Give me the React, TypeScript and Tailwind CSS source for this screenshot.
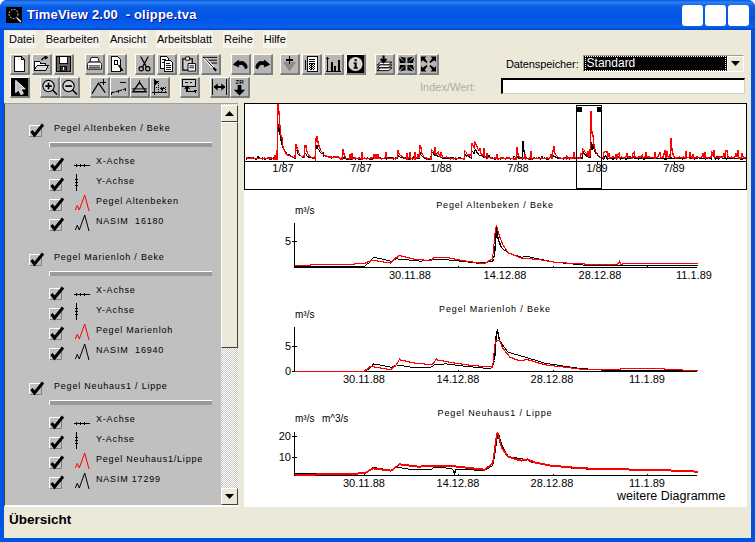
import React from "react";

type P = [number, number];

function steps(points: P[], ox: number, oy: number): string {
  const pts = points.map(([x, y]) => [x / 3 + ox, y / 3 + oy]);
  let d = "";
  const x0 = Math.round(pts[0][0]);
  const x1 = Math.round(pts[pts.length - 1][0]);
  let i = 0;
  for (let x = x0; x <= x1; x++) {
    while (i < pts.length - 2 && pts[i + 1][0] < x) i++;
    const [ax, ay] = pts[i];
    const [bx, by] = pts[i + 1];
    const t = bx === ax ? 0 : Math.min(1, Math.max(0, (x - ax) / (bx - ax)));
    const y = Math.round(ay + (by - ay) * t);
    d += (d ? "L" : "M") + x + " " + y + " ";
  }
  return d;
}

function overview(red: boolean): string {
  const peaks: number[][] = [
    [278, 55, 26, 2], [279, 14, 18, 6], [296, 14, 8, 3], [305, 11, 5, 3], [316, 20, 10, 3], [317, 6, 5, 9],
    [343, 10, 1, 1], [398, 6, 3, 3], [420, 14, 7, 2], [432, 9, 6, 6], [465, 8, 4, 5], [472, 14, 7, 5], [475, 8, 5, 5],
    [517, 12, 2, 1], [523, 1, 15, 1], [553, 8, 3, 3], [583, 10, 7, 4], [591, 46, 14, 1.5], [593, 10, 10, 3],
    [671, 19, 1, 1], [712, 5, 6, 1],
  ];
  let seed = red ? 12345 : 777;
  const rnd = () => {
    seed = (seed * 1103515245 + 12345) & 0x7fffffff;
    return seed / 0x7fffffff;
  };
  let d = "";
  for (let x = 246; x <= 746; x++) {
    let y = 159;
    for (const [x0, hr, hb, tau] of peaks) {
      if (x >= x0) y -= (red ? hr : hb) * Math.exp(-(x - x0) / tau);
    }
    const dense = x > 600 ? 0.18 : x > 330 ? 0.1 : 0.05;
    y -= Math.floor(rnd() * 2);
    if (rnd() < dense) y -= (red ? 3 : 1) + Math.floor(rnd() * (red ? 5 : 2));
    if (x > 600 && red) y -= 1;
    d += (d ? "L" : "M") + x + " " + Math.round(y) + " ";
  }
  return d;
}

const c1b: P[] = [[150,213],[230,213],[340,213],[360,213],[375,200],[387,185],[410,190],[440,197],[455,190],[480,192],[530,197],[565,192],[600,192],[640,196],[700,203],[745,197],[752,170],[755,85],[760,130],[770,155],[790,172],[830,185],[850,183],[880,190],[930,200],[1040,211],[1200,209],[1358,211]];
const c1r: P[] = [[150,210],[250,207],[360,205],[375,197],[387,195],[440,203],[455,188],[465,180],[510,192],[560,195],[570,187],[610,187],[650,195],[720,205],[745,190],[750,130],[755,85],[762,115],[775,150],[790,172],[830,188],[880,192],[930,200],[1000,205],[1120,208],[1124,197],[1128,207],[1150,203],[1280,205],[1358,205]];
const c2b: P[] = [[150,213],[360,213],[375,205],[387,190],[440,200],[455,193],[500,200],[560,200],[570,193],[605,190],[650,196],[740,205],[750,180],[757,82],[765,120],[790,155],[850,172],[900,188],[1000,203],[1100,211],[1358,211]];
const c2r: P[] = [[150,213],[360,213],[378,198],[440,208],[455,195],[465,178],[510,188],[565,193],[575,178],[620,186],[680,195],[745,200],[752,120],[765,120],[775,145],[795,170],[820,180],[850,178],[900,193],[1000,205],[1030,208],[1150,205],[1250,205],[1358,211]];
const c3b: P[] = [[150,220],[215,220],[360,220],[385,200],[440,210],[455,200],[500,207],[560,207],[570,200],[610,203],[626,206],[630,218],[634,206],[720,210],[745,195],[752,150],[760,93],[770,130],[790,168],[850,178],[860,185],[920,195],[1000,205],[1150,208],[1300,212],[1358,212]];
const c3r: P[] = [[150,225],[360,220],[385,205],[440,212],[465,193],[520,200],[570,197],[620,198],[720,209],[745,190],[758,93],[770,140],[790,170],[830,182],[850,178],[870,187],[920,197],[1010,205],[1300,212],[1358,215]];

function Chart(props: {
  top: number; height: number; title: string; titleX: number; titleY: number; unit: string; unit2?: string; unitY: number;
  axisTop: number; base: number; yt: [number, string][]; ticks: number[]; labels: [number, string][];
  black: string; red: string; redWidth: number;
}) {
  const { top, height, title, titleX, titleY, unit, unit2, unitY, axisTop, base, yt, ticks, labels, black, red, redWidth } = props;
  return (
    <svg width={503} height={height} viewBox={`244 ${top} 503 ${height}`} className="block shrink-0">
      <text x={titleX} y={titleY} textAnchor="middle" fontSize={9} letterSpacing={0.85} fill="#000">{title}</text>
      <text x={295} y={unitY} fontSize={10} fill="#000">{unit}</text>
      {unit2 && <text x={322} y={unitY} fontSize={10} fill="#000">{unit2}</text>}
      <g shapeRendering="crispEdges" stroke="#000" fill="none">
        <path d={`M294.5 ${axisTop}V${base + 0.5}`} />
        <path d={`M294 ${base + 0.5}H697`} />
        {yt.map(([y]) => <path key={y} d={`M292 ${y + 0.5}H297`} />)}
        {ticks.map((x) => <path key={x} d={`M${x + 0.5} ${base - 1}V${base + 1}`} />)}
        <path d={black} strokeWidth={1.4} transform="translate(0.5 0.5)" />
        <path d={red} stroke="#f00" strokeWidth={redWidth} transform="translate(0.5 0)" />
      </g>
      {yt.map(([y, l]) => (
        <text key={l} x={291} y={y + 4} textAnchor="end" fontSize={11} fill="#000">{l}</text>
      ))}
      {labels.map(([x, l]) => (
        <text key={l} x={x} y={base + 12} textAnchor="middle" fontSize={11} fill="#000">{l}</text>
      ))}
    </svg>
  );
}

function Icon({ children }: { children: React.ReactNode }) {
  return (
    <svg width={18} height={18} viewBox="0 0 18 18" fill="none" stroke="#000" strokeWidth={1} className="block" shapeRendering="crispEdges">
      {children}
    </svg>
  );
}

function Btn({ children, dark }: { children: React.ReactNode; dark?: boolean }) {
  return (
    <div
      className={
        "w-5 h-[21px] shrink-0 flex items-center justify-center border-t border-l border-t-white border-l-white border-r-2 border-b-2 border-r-[#7d7d7d] border-b-[#7d7d7d] " +
        (dark ? "bg-black" : "bg-[#b6b6b6]")
      }
    >
      {children}
    </div>
  );
}

const icons: Record<string, React.ReactNode> = {
  new: <path d="M3.5 1.5H11.5L14.5 4.5V16.5H3.5ZM11.5 1.5V4.5H14.5" fill="#fff" />,
  open: (<><path d="M1.5 15.5V6.5H7.5V8.5H13.5V15.5Z" fill="#fff" /><path d="M1.5 15.5L4.5 10.5H16.5L13.5 15.5" fill="#ddd" /><path d="M9 5C10 3 12 2 14 2M12 1L15 2L13 4" strokeWidth={1.4} shapeRendering="auto" /></>),
  save: (<><path d="M1.5 1.5H16.5V16.5H1.5Z" fill="#666" /><path d="M4.5 1.5H13.5V8.5H4.5Z" fill="#fff" /><path d="M5.5 11.5H12.5V16.5H5.5Z" fill="#333" /><path d="M9.5 12V15.5" stroke="#fff" /></>),
  print: (<g shapeRendering="auto"><path d="M5.5 2H12.5L14 7H4Z" fill="#fff" /><path d="M1.5 9.5C1.5 7.5 3 7 4 7H14C15 7 16.5 7.5 16.5 9.5V14.5H1.5Z" fill="#fff" /><path d="M3 11H15M3 13H15" /></g>),
  preview: (<><path d="M3.5 1.5H10.5L13.5 4.5V16.5H3.5Z" fill="#fff" /><path d="M10 5.5H7V9.5H10Z" strokeWidth={1.2} /><path d="M11 10L15 15M13 15.5H16" strokeWidth={1.6} shapeRendering="auto" /></>),
  cut: (<g shapeRendering="auto"><path d="M5 1L11 12M13 1L7 12" strokeWidth={1.3} /><circle cx={5.5} cy={14} r={2.3} strokeWidth={1.3} /><circle cx={12.5} cy={14} r={2.3} strokeWidth={1.3} /></g>),
  copy: (<><path d="M2.5 1.5H9.5L11.5 3.5V13.5H2.5Z" fill="#fff" /><path d="M6.5 5.5H13.5L15.5 7.5V16.5H6.5Z" fill="#fff" /><path d="M4 4.5H8M4 7.5H6M8 8.5H13M8 10.5H14M8 12.5H14M8 14.5H14" /></>),
  paste: (<g shapeRendering="auto"><path d="M3 3.5H13V15.5H3Z" fill="#ccc" strokeWidth={1.3} /><path d="M6 1.5H10V5H6Z" fill="#fff" /><path d="M8.5 8.5H16.5V16.5H8.5Z" fill="#fff" /><path d="M10 11H15M10 13H15" /></g>),
  wand: (<g shapeRendering="auto"><path d="M1 2H16M5 5H16M9 8H16" strokeWidth={1} /><path d="M3 3L14 15" stroke="#fff" strokeWidth={3} /><path d="M3 3L14 15" strokeWidth={1} /><path d="M12 13L15 16" strokeWidth={2.5} /></g>),
  undo: <path d="M7 3L1.5 7.5L7 10V8C10 6.5 13 8 14 12L16 11C16 6 12 3 7 5Z" fill="#000" shapeRendering="auto" transform="translate(0 2)" />,
  redo: <path d="M11 3L16.5 7.5L11 10V8C8 6.5 5 8 4 12L2 11C2 6 6 3 11 5Z" fill="#000" shapeRendering="auto" transform="translate(0 2)" />,
  heart: (<><path d="M2 7H8L9 8L10 7H16L9 17Z" fill="#8c8c8c" stroke="none" shapeRendering="auto" /><path d="M9 1V9M5 5H13" strokeWidth={2} /></>),
  calc: (<><path d="M4.5 1.5H15.5V16.5H4.5Z" fill="#fff" /><path d="M2.5 4.5V15.5" /><path d="M6 4H14M6 6.5H14M6 9H14M6 11.5H14M6 14H14M8.5 4V15M11.5 4V15" strokeDasharray="1 1" strokeWidth={1.2} /></>),
  bars: (<><path d="M2.5 17V2M1 3.5H4M1 17H17" strokeWidth={1.4} /><path d="M6 7H8V16H6ZM10 11H12V16H10ZM14 5H16V16H14Z" fill="#000" stroke="none" /></>),
  info: (<g shapeRendering="auto"><circle cx={9} cy={9} r={7.5} fill="#d5d5d5" stroke="none" /><path d="M8 4H10.3V6.2H8ZM7 7.5H10.3V12.5H11.5V14H7V12.5H8V9H7Z" fill="#000" stroke="none" /></g>),
  stack: (<g shapeRendering="auto"><path d="M1 10L5 7H17L13 10Z" fill="#fff" /><path d="M1 13L5 10H17L13 13H1ZM1 16L5 13H17L13 16Z" fill="#fff" /><path d="M8 0V6M5 3.5L8 7L11 3.5" strokeWidth={2.2} /></g>),
  shrink: (<g shapeRendering="auto" fill="#000" stroke="none"><path d="M2 1L8 8V2H6ZM16 1L10 8V2H12ZM2 17L8 10V16H6ZM16 17L10 10V16H12ZM1 2L8 8H2ZM17 2L10 8H16ZM1 16L8 10H2ZM17 16L10 10H16Z" /></g>),
  grow: (<g shapeRendering="auto" fill="#000" stroke="none"><path d="M1 1H7L5 3L8 7L7 8L3 5L1 7ZM17 1H11L13 3L10 7L11 8L15 5L17 7ZM1 17H7L5 15L8 11L7 10L3 13L1 11ZM17 17H11L13 15L10 11L11 10L15 13L17 11Z" /></g>),
  arrow: <path d="M5 2V15L8 12L10.5 17L13 16L10.5 11H15Z" fill="#c0c0c0" stroke="#fff" shapeRendering="auto" />,
  zin: (<g shapeRendering="auto"><circle cx={8} cy={8} r={6} fill="#d5d5d5" strokeWidth={1.2} /><path d="M12 12L17 17" strokeWidth={1.6} /><path d="M8 4.5V11.5M4.5 8H11.5" strokeWidth={1.8} /></g>),
  zout: (<g shapeRendering="auto"><circle cx={8} cy={8} r={6} fill="#d5d5d5" strokeWidth={1.2} /><path d="M12 12L17 17" strokeWidth={1.6} /><path d="M4.5 8H11.5" strokeWidth={1.8} /></g>),
  lplus: (<g shapeRendering="auto"><path d="M1 16L8 5L15 15" strokeWidth={1.3} /><path d="M13 1V7M10 4H16" shapeRendering="crispEdges" /></g>),
  lminus: (<g shapeRendering="auto"><path d="M1 15L16 11" strokeWidth={1.2} strokeDasharray="3 1" /><path d="M10 4H16" shapeRendering="crispEdges" /><path d="M1 14V17M8 12V15M15 10V13" shapeRendering="crispEdges" /></g>),
  tri: (<g shapeRendering="auto"><path d="M9 4L16 14H2Z" strokeWidth={1.4} /><path d="M1 11H17" strokeWidth={1} /><path d="M9 2V6" /></g>),
  axes: (<><path d="M3.5 1V17M1 14.5H17" /><path d="M7.5 3V14M11.5 9V14M15.5 9V14M3 9.5H16" strokeDasharray="1 1" /><path d="M4 1L8 4L4 7Z" fill="#000" stroke="none" /><path d="M10 11H15M12.5 10V13" /></>),
  win: (<><path d="M1.5 1.5H15.5V8.5H1.5Z" fill="#c8c8c8" /><path d="M4 4.5H7M9 4.5H12" /><path d="M6.5 8V14H15" strokeWidth={1.5} /><path d="M4 11L6.5 8L9 11" strokeWidth={1.2} shapeRendering="auto" /><path d="M14 13H17M15.5 12V15" /></>),
  fit: (<><path d="M1.5 1V17M16.5 1V17" /><path d="M3 9H15" strokeWidth={1.4} /><path d="M3 9L7 5V13ZM15 9L11 5V13Z" fill="#000" stroke="none" shapeRendering="auto" /></>),
};

function ZrIcon() {
  return (
    <svg width={18} height={18} viewBox="0 0 18 18" className="block">
      <text x={9} y={5.5} textAnchor="middle" fontSize={6.5} fontWeight={700} fill="#000">ZR</text>
      <path d="M7 7H11V12H15L9 18L3 12H7Z" fill="#000" />
    </svg>
  );
}

function B({ n, dark }: { n: string; dark?: boolean }) {
  return <Btn dark={dark}><Icon>{icons[n]}</Icon></Btn>;
}

function Check() {
  return (
    <svg width={16} height={15} viewBox="0 0 16 15" className="block shrink-0">
      <path d="M0.5 13.5V2.5H12" stroke="#fff" fill="none" />
      <path d="M12.5 2.5V13.5H0.5" stroke="#808080" fill="none" />
      <path d="M2.5 8L5.5 12L14 1.5" stroke="#000" strokeWidth={3} fill="none" />
    </svg>
  );
}

function Legend({ kind }: { kind: "x" | "y" | "r" | "b" }) {
  return (
    <svg width={17} height={20} viewBox="0 0 17 20" className="block shrink-0 mt-[-3px]" fill="none" stroke="#000">
      {kind === "x" && <path shapeRendering="crispEdges" d="M0 11.5H16M2.5 10V13M6.5 10V13M10.5 10V13" />}
      {kind === "y" && <path shapeRendering="crispEdges" d="M2.5 0V17M1 5.5H4M1 8.5H4M1 11.5H4" />}
      {kind === "r" && <polyline points="1.3,16 3.3,11.3 5.3,16 10.7,1 15,17" stroke="#f00" />}
      {kind === "b" && <polyline points="1.3,16 3.3,11.3 5.3,16 10.7,1 15,17" />}
    </svg>
  );
}

function Row({ kind, label }: { kind: "x" | "y" | "r" | "b"; label: string }) {
  return (
    <div className="h-5 flex items-start pl-[44px]">
      <Check />
      <div className="ml-[9px]"><Legend kind={kind} /></div>
      <span className="ml-[5px] text-[9px] leading-[8px] tracking-[0.8px] whitespace-pre text-black">{label}</span>
    </div>
  );
}

function Group({ title, name, nasim }: { title: string; name: string; nasim: string }) {
  return (
    <div className="h-[129px] shrink-0">
      <div className="h-[19px] flex items-start pl-[24px]">
        <Check />
        <span className="ml-[9px] text-[9px] leading-[10px] tracking-[0.8px] text-black">{title}</span>
      </div>
      <div className="ml-[44px] w-[163px] h-[5px] bg-[#9a9a9a] border-t border-l border-white mb-[10px]" />
      <Row kind="x" label="X-Achse" />
      <Row kind="y" label="Y-Achse" />
      <Row kind="r" label={name} />
      <Row kind="b" label={nasim} />
    </div>
  );
}

function ScrollBtn({ up }: { up?: boolean }) {
  return (
    <div className="w-[17px] h-[17px] shrink-0 bg-[#ece9d8] border-t border-l border-t-white border-l-white border-r border-b border-r-[#404040] border-b-[#404040] flex items-center justify-center">
      <svg width={9} height={5} viewBox="0 0 9 5"><path d={up ? "M4.5 0L9 5H0Z" : "M0 0H9L4.5 5Z"} fill="#000" /></svg>
    </div>
  );
}

export default function App() {
  const ovLabels: [number, string][] = [[283, "1/87"], [361, "7/87"], [441, "1/88"], [518, "7/88"], [597, "1/89"], [674, "7/89"]];
  const ticks = [364, 458, 553, 647];
  return (
    <div className="w-[755px] h-[542px] flex flex-col rounded-t-[7px] overflow-hidden bg-[#0054e3] font-['Liberation_Sans',Arial,sans-serif]">
      <div className="h-[30px] shrink-0 flex items-center pl-[6px] pr-[6px] bg-[linear-gradient(180deg,#0a5be0_0%,#2b80f5_8%,#0a5ce6_22%,#0054e3_60%,#0a5fee_90%,#0047c8_100%)]">
        <svg width={16} height={16} viewBox="0 0 16 16" className="block shrink-0">
          <rect width={16} height={16} fill="#000" />
          <circle cx={7.5} cy={7} r={4.5} fill="none" stroke="#fff" strokeDasharray="1.5 1.5" />
          <path d="M11 11L15 15" stroke="#fff" strokeWidth={1.3} />
        </svg>
        <span className="ml-[5px] text-white font-bold text-[13px] tracking-[0.2px] whitespace-pre [text-shadow:1px_1px_#0f1089]">TimeView 2.00  - olippe.tva</span>
        <div className="ml-auto flex gap-[2px]">
          <div className="w-[21px] h-[21px] rounded-[3px] bg-white" />
          <div className="w-[21px] h-[21px] rounded-[3px] bg-white" />
          <div className="w-[21px] h-[21px] rounded-[3px] bg-white" />
        </div>
      </div>

      <div className="flex-1 mx-[4px] mb-[4px] bg-[#ece9d8] flex flex-col min-h-0">
        <div className="h-[19px] shrink-0 flex items-center pl-[4px] text-[11px] text-black">
          <span className="bg-white/50 px-px">Datei</span>
          <span className="ml-[9px] bg-white/50 px-px">Bearbeiten</span>
          <span className="ml-[9px] bg-white/50 px-px">Ansicht</span>
          <span className="ml-[9px] bg-white/50 px-px">Arbeitsblatt</span>
          <span className="ml-[10px] bg-white/50 px-px">Reihe</span>
          <span className="ml-[9px] bg-white/50 px-px">Hilfe</span>
        </div>

        <div className="h-[54px] shrink-0 pt-[5px] flex flex-col gap-[2px]">
          <div className="h-[21px] flex items-center pl-[6px]">
            <div className="flex gap-[2px]"><B n="new" /><B n="open" /><B n="save" /></div>
            <div className="flex gap-[2px] ml-[11px]"><B n="print" /><B n="preview" /></div>
            <div className="flex gap-[2px] ml-[8px]"><B n="cut" /><B n="copy" /><B n="paste" /><B n="wand" /></div>
            <div className="flex gap-[2px] ml-[10px]"><B n="undo" /><B n="redo" /></div>
            <div className="flex gap-[2px] ml-[7px]"><B n="heart" /><B n="calc" /><B n="bars" /><B n="info" dark /></div>
            <div className="flex gap-[2px] ml-[9px]"><B n="stack" /><B n="shrink" /><B n="grow" /></div>
            <span className="ml-[67px] text-[11px] tracking-[-0.1px] text-black whitespace-pre">Datenspeicher:</span>
            <div className="ml-[4px] w-[161px] h-[17px] mb-[3px] bg-black flex items-center border border-[#a09d8c] border-r-white border-b-white">
              <span className="flex-1 text-[12px] leading-[13px] text-white border border-dotted border-white mx-px pl-[1px]">Standard</span>
              <div className="w-[16px] h-[15px] bg-[#ece9d8] border-t border-l border-white flex items-center justify-center shrink-0">
                <svg width={9} height={5} viewBox="0 0 9 5"><path d="M0 0H9L4.5 5Z" fill="#000" /></svg>
              </div>
            </div>
          </div>
          <div className="h-[21px] flex items-center pl-[6px]">
            <B n="arrow" dark />
            <div className="flex ml-[10px]"><B n="zin" /><B n="zout" /></div>
            <div className="flex ml-[10px]"><B n="lplus" /><B n="lminus" /><B n="tri" /><B n="axes" /></div>
            <div className="flex ml-[10px]"><B n="win" /></div>
            <div className="flex ml-[10px]"><B n="fit" /><Btn><ZrIcon /></Btn></div>
            <span className="ml-[170px] text-[11px] text-[#b0ad9d] whitespace-pre">Index/Wert:</span>
            <div className="ml-[25px] w-[244px] h-[16px] mb-[3px] bg-white border-t-2 border-l-2 border-t-black border-l-black border-r border-b border-r-[#d4d0c8] border-b-[#d4d0c8]" />
          </div>
        </div>

        <div className="h-[404px] shrink-0 flex">
          <div className="w-[234px] shrink-0 flex border-l border-l-[#404040] border-b-2 border-b-white border-t border-t-[#a0a0a0]">
            <div className="flex-1 min-w-0 bg-[#c0c0c0] overflow-hidden pt-[19px] flex flex-col">
              <Group title="Pegel Altenbeken / Beke" name="Pegel Altenbeken" nasim="NASIM  16180" />
              <Group title="Pegel Marienloh / Beke" name="Pegel Marienloh" nasim="NASIM  16940" />
              <Group title="Pegel Neuhaus1 / Lippe" name="Pegel Neuhaus1/Lippe" nasim="NASIM 17299" />
            </div>
            <div className="w-[17px] shrink-0 flex flex-col pt-px bg-[repeating-conic-gradient(#ffffff_0_25%,#c8c8c8_0_50%)] bg-[length:2px_2px]">
              <ScrollBtn up />
              <div className="h-[226px] shrink-0 bg-[#ece9d8] border border-white border-r-[#404040] border-b-[#404040]" />
              <div className="flex-1" />
              <ScrollBtn />
            </div>
          </div>

          <div className="ml-[6px] w-[503px] shrink-0 flex flex-col bg-white">
            <svg width={503} height={87} viewBox="244 103 503 87" className="block shrink-0">
              <g shapeRendering="crispEdges" fill="none" stroke="#000">
                <path d={overview(false)} strokeWidth={1.2} />
                <path d={overview(true)} stroke="#f00" strokeWidth={1.3} />
                <path d="M244 161.5H747" />
                {ovLabels.map(([x]) => <path key={x} d={`M${x + 0.5} 162V164`} />)}
                <rect x={244.5} y={103.5} width={502} height={86} />
                <rect x={576.5} y={105.5} width={25} height={83} />
                <rect x={577} y={107} width={4} height={4} fill="#000" />
                <rect x={597} y={107} width={4} height={4} fill="#000" />
              </g>
              {ovLabels.map(([x, l]) => (
                <text key={l} x={x} y={172} textAnchor="middle" fontSize={11} fill="#000">{l}</text>
              ))}
            </svg>
            <div className="pt-[5px] flex flex-col">
              <Chart top={195} height={105} title="Pegel Altenbeken / Beke" titleX={495} titleY={208} unit="m³/s" unitY={214}
                axisTop={223} base={267} yt={[[241, "5"]]} ticks={ticks}
                labels={[[410, "30.11.88"], [505, "14.12.88"], [600, "28.12.88"], [694, "11.1.89"]]}
                black={steps(c1b, 244, 195)} red={steps(c1r, 244, 195)} redWidth={1} />
              <Chart top={300} height={100} title="Pegel Marienloh / Beke" titleX={495} titleY={312} unit="m³/s" unitY={318}
                axisTop={327} base={371} yt={[[346, "5"], [371, "0"]]} ticks={ticks}
                labels={[[364, "30.11.88"], [458, "14.12.88"], [552, "28.12.88"], [647, "11.1.89"]]}
                black={steps(c2b, 244, 300)} red={steps(c2r, 244, 300)} redWidth={1} />
              <Chart top={400} height={90} title="Pegel Neuhaus1 / Lippe" titleX={495} titleY={416} unit="m³/s" unit2="m^3/s" unitY={422}
                axisTop={432} base={475} yt={[[436, "20"], [457, "10"]]} ticks={ticks}
                labels={[[364, "30.11.88"], [458, "14.12.88"], [552, "28.12.88"], [647, "11.1.89"]]}
                black={steps(c3b, 244, 400)} red={steps(c3r, 244, 400)} redWidth={1.4} />
              <div className="h-[12px] pl-[373px] text-[12.5px] leading-[12px] text-black whitespace-pre">weitere Diagramme</div>
            </div>
          </div>
        </div>

        <div className="flex-1 flex items-start pt-[5px] pl-[5px] text-[13.5px] leading-[16px] font-bold text-black">Übersicht</div>
      </div>
    </div>
  );
}
